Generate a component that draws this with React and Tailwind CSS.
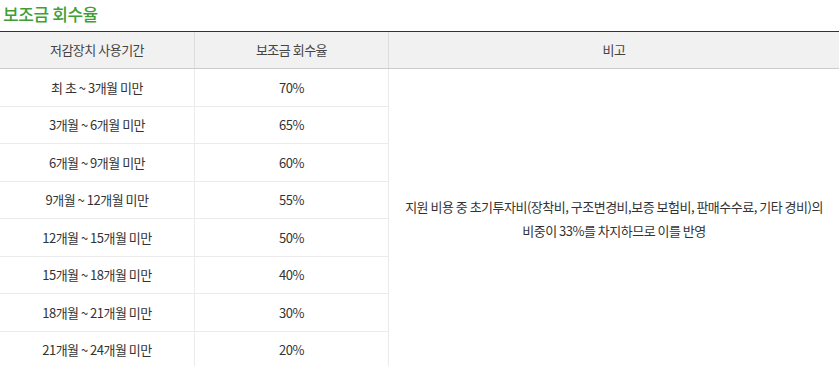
import React from "react";

const rows = [
  ["최 초 ~ 3개월 미만", "70%"],
  ["3개월 ~ 6개월 미만", "65%"],
  ["6개월 ~ 9개월 미만", "60%"],
  ["9개월 ~ 12개월 미만", "55%"],
  ["12개월 ~ 15개월 미만", "50%"],
  ["15개월 ~ 18개월 미만", "40%"],
  ["18개월 ~ 21개월 미만", "30%"],
  ["21개월 ~ 24개월 미만", "20%"],
];

export default function App() {
  return (
    <div
      className="w-[839px] bg-white text-[#333]"
      style={{ fontFamily: '"Noto Sans CJK KR", "Noto Sans", sans-serif' }}
    >
      <h3 className="h-[31px] pl-[3px] pt-[2px] text-[17px] leading-[24px] font-medium tracking-[-0.4px] text-[#3f9f36]">
        보조금 회수율
      </h3>
      <div className="border-t border-[#333]">
        <div className="grid grid-cols-[195px_194px_1fr] h-[37px] bg-[#f1f1f1] border-b border-[#cccccc] text-[13px] tracking-[-0.5px] text-[#444]">
          <div className="flex items-center justify-center border-r border-[#dddddd]">저감장치 사용기간</div>
          <div className="flex items-center justify-center border-r border-[#dddddd]">보조금 회수율</div>
          <div className="flex items-center justify-center">비고</div>
        </div>
        <div className="flex">
          <div className="w-[389px] shrink-0">
            {rows.map(([a, b], i) => (
              <div
                key={i}
                className="grid grid-cols-[195px_194px] h-[37.5px] border-b border-[#ebebeb] text-[13px] tracking-[-0.5px]"
              >
                <div className="flex items-center justify-center border-r border-[#ebebeb]">{a}</div>
                <div className="flex items-center justify-center border-r border-[#ebebeb]">{b}</div>
              </div>
            ))}
          </div>
          <div className="flex-1 flex items-center justify-center text-center text-[13px] leading-[24px] tracking-[-0.5px]">
            <p>
              지원 비용 중 초기투자비(장착비, 구조변경비,보증 보험비, 판매수수료, 기타 경비)의
              <br />
              비중이 33%를 차지하므로 이를 반영
            </p>
          </div>
        </div>
      </div>
    </div>
  );
}
